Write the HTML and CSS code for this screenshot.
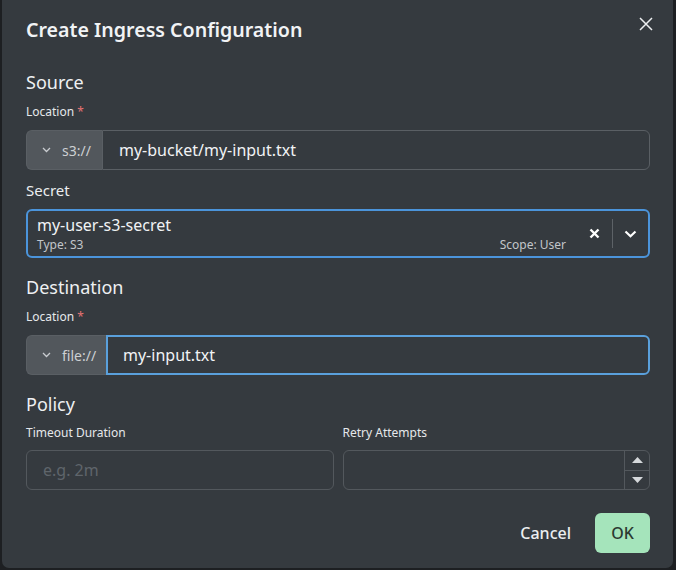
FILE: index.html
```html
<!DOCTYPE html>
<html>
<head>
<meta charset="utf-8">
<link rel="stylesheet" href="styles.css">
</head>
<body>
<div class="dialog">
  <div class="header">
    <h1 class="title">Create Ingress Configuration</h1>
    <button class="close" aria-label="Close">
      <svg width="14" height="14" viewBox="0 0 14 14"><path d="M1 1L13 13M13 1L1 13" stroke="#eceef0" stroke-width="1.5" fill="none"/></svg>
    </button>
  </div>

  <h2 class="section">Source</h2>
  <div class="label">Location <span class="req">*</span></div>
  <div class="igroup">
    <div class="prefix prefix-s3">
      <svg class="chev-sm" width="9" height="6" viewBox="0 0 9 6"><path d="M1 1L4.5 4.5L8 1" stroke="#c9ccd0" stroke-width="1.3" fill="none"/></svg>
      <span>s3://</span>
    </div>
    <div class="ifield">my-bucket/my-input.txt</div>
  </div>

  <div class="label-lg">Secret</div>
  <div class="select">
    <div class="sel-value">
      <div class="sel-main">my-user-s3-secret</div>
      <div class="sel-meta"><span>Type: S3</span><span>Scope: User</span></div>
    </div>
    <div class="sel-clear">
      <svg width="11" height="11" viewBox="0 0 11 11"><path d="M1.5 1.5L9.5 9.5M9.5 1.5L1.5 9.5" stroke="#ffffff" stroke-width="2.4" fill="none"/></svg>
    </div>
    <div class="sel-sep"></div>
    <div class="sel-arrow">
      <svg width="13" height="8" viewBox="0 0 13 8"><path d="M1.5 1.5L6.5 6.2L11.5 1.5" stroke="#ffffff" stroke-width="2.2" fill="none"/></svg>
    </div>
  </div>

  <h2 class="section section-gap">Destination</h2>
  <div class="label">Location <span class="req">*</span></div>
  <div class="igroup">
    <div class="prefix prefix-file">
      <svg class="chev-sm" width="9" height="6" viewBox="0 0 9 6"><path d="M1 1L4.5 4.5L8 1" stroke="#c9ccd0" stroke-width="1.3" fill="none"/></svg>
      <span>file://</span>
    </div>
    <div class="ifield focused">my-input.txt</div>
  </div>

  <h2 class="section section-gap">Policy</h2>
  <div class="policy">
    <div class="pcol">
      <div class="label">Timeout Duration</div>
      <div class="pinput"><span class="placeholder">e.g. 2m</span></div>
    </div>
    <div class="pcol">
      <div class="label">Retry Attempts</div>
      <div class="pinput num">
        <div class="num-field"></div>
        <div class="spin">
          <div class="spin-btn"><svg width="11" height="6" viewBox="0 0 11 6"><path d="M5.5 0L11 6H0Z" fill="#d5d8db"/></svg></div>
          <div class="spin-btn"><svg width="11" height="6" viewBox="0 0 11 6"><path d="M0 0H11L5.5 6Z" fill="#d5d8db"/></svg></div>
        </div>
      </div>
    </div>
  </div>

  <div class="footer">
    <button class="btn-cancel">Cancel</button>
    <button class="btn-ok">OK</button>
  </div>
</div>
</body>
</html>
```

FILE: styles.css
```css
* { box-sizing: border-box; }
html, body { margin: 0; padding: 0; }
body {
  background: #1d1f22;
  font-family: "Noto Sans", "Open Sans", sans-serif;
  color: #e9ebed;
  width: 676px;
  height: 570px;
  overflow: hidden;
}
.dialog {
  margin-left: 2px;
  width: 671px;
  height: 568px;
  background: #353a3f;
  border-radius: 0 0 7px 7px;
  padding: 16px 23px 15px 24px;
  display: flex;
  flex-direction: column;
}
.header {
  display: flex;
  align-items: center;
  justify-content: space-between;
  height: 28px;
  margin-bottom: 26px;
}
.title {
  margin: 0;
  font-size: 19.6px;
  font-weight: 600;
  line-height: 28px;
  color: #f1f3f5;
}
.close {
  background: none;
  border: 0;
  padding: 0;
  margin-right: -3px;
  margin-top: -13px;
  width: 14px;
  height: 14px;
  display: flex;
}
.section {
  margin: 0 0 9px 0;
  font-size: 18px;
  font-weight: 400;
  line-height: 24px;
  color: #eef0f2;
}
.section-gap { margin-top: 17px; }
.label {
  font-size: 12px;
  line-height: 18px;
  font-weight: 400;
  color: #e6e8eb;
  margin-bottom: 9px;
}
.req { color: #e57373; }
.label-lg {
  font-size: 15px;
  line-height: 22px;
  color: #eceef0;
  margin-top: 9px;
  margin-bottom: 8px;
}
.igroup {
  display: flex;
  height: 40px;
}
.prefix {
  display: flex;
  align-items: center;
  background: #52575c;
  border-radius: 6px 0 0 6px;
  border: 1px solid #5a5f64;
  border-right: 0;
  padding-left: 15px;
  font-size: 14px;
  color: #cdd0d3;
}
.prefix-s3 { width: 76px; }
.prefix-file { width: 80px; }
.chev-sm { margin-right: 11px; }
.ifield {
  flex: 1;
  display: flex;
  align-items: center;
  border: 1px solid #5a5f64;
  border-radius: 0 6px 6px 0;
  padding-left: 16px;
  font-size: 16px;
  color: #f1f3f5;
}
.ifield.focused {
  border: 2px solid #5aa0dc;
  padding-left: 15px;
}
.select {
  display: flex;
  align-items: center;
  height: 49px;
  border: 2px solid #4b94db;
  border-radius: 6px;
  padding-left: 9px;
}
.sel-value {
  flex: 1;
  display: flex;
  flex-direction: column;
  margin-right: 10px;
}
.sel-main {
  font-size: 16px;
  line-height: 21px;
  color: #f1f3f5;
}
.sel-meta {
  display: flex;
  justify-content: space-between;
  font-size: 12px;
  line-height: 16px;
  color: #c3c6ca;
  margin-top: 1px;
}
.sel-clear {
  width: 36px;
  display: flex;
  justify-content: center;
  margin-top: -1px;
}
.sel-sep {
  width: 1px;
  height: 29px;
  background: #5d6267;
}
.sel-arrow {
  width: 35px;
  display: flex;
  justify-content: center;
}
.policy {
  display: flex;
  gap: 9px;
}
.pcol {
  flex: 1;
  display: flex;
  flex-direction: column;
}
.pcol .label { margin-bottom: 8px; margin-top: -1px; }
.pinput {
  height: 40px;
  border: 1px solid #53585d;
  border-radius: 6px;
  display: flex;
  align-items: center;
  padding-left: 16px;
  font-size: 16px;
}
.placeholder { color: #5f656b; }
.pinput.num { padding-left: 0; }
.num-field { flex: 1; }
.spin {
  width: 25px;
  height: 100%;
  border-left: 1px solid #53585d;
  display: flex;
  flex-direction: column;
}
.spin-btn {
  flex: 1;
  display: flex;
  align-items: center;
  justify-content: center;
}
.spin-btn:first-child { border-bottom: 1px solid #53585d; }
.footer {
  margin-top: auto;
  display: flex;
  justify-content: flex-end;
  align-items: center;
  gap: 24px;
}
.btn-cancel {
  background: none;
  border: 0;
  font-family: inherit;
  font-size: 16px;
  font-weight: 500;
  color: #eceef0;
  padding: 0;
  height: 40px;
}
.btn-ok {
  background: #a5e4bb;
  border: 0;
  border-radius: 6px;
  width: 55px;
  height: 40px;
  font-family: inherit;
  font-size: 16px;
  font-weight: 500;
  color: #2c3a31;
}
```
